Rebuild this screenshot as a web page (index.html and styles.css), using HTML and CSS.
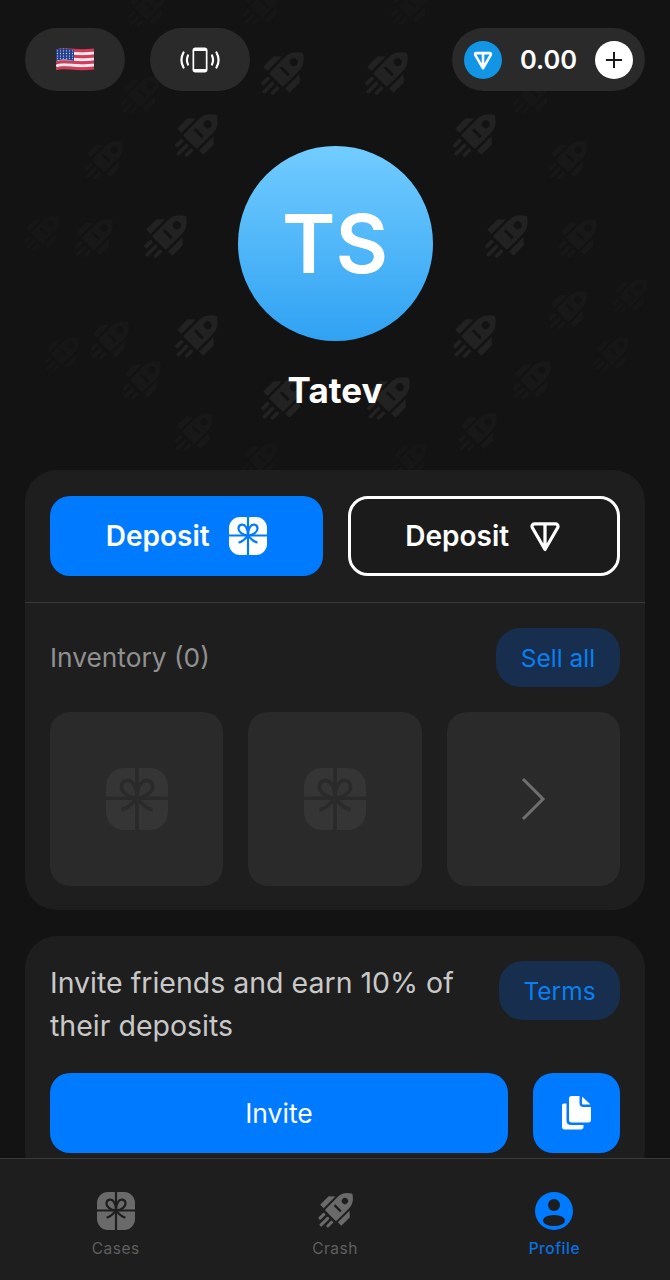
FILE: index.html
```html
<!DOCTYPE html>
<html lang="en">

<head>
    <meta charset="UTF-8">
    <meta name="viewport" content="width=device-width, initial-scale=1.0">
    <title>Profile</title>
    <link rel="stylesheet" href="styles.css">
</head>

<body>
    <!-- Shared icons -->
    <svg class="defs" width="0" height="0">
        <symbol id="gift" viewBox="0 0 38 38">
            <rect x="0" y="0" width="38" height="38" rx="11" fill="currentColor"></rect>
            <path class="cut" d="M19 0V38M0 18.5H38"></path>
            <path class="cut" d="M19 18.500C14 18 9 15 9.500 11C10 7 15 6.500 17 10C18.300 12 19 15 19 18.500C19 15 19.700 12 21 10C23 6.500 28 7 28.500 11C29 15 24 18 19 18.500C16.500 21 14 25 9.500 25.500M19 18.500C21.500 21 24 25 28.500 25.500"></path>
        </symbol>
        <symbol id="rocket" viewBox="0 0 38 38">
            <g transform="rotate(45 19 19)">
                <path fill="currentColor" d="M11 24V7C11 1 15 -3 19 -5.500C23 -3 27 1 27 7V24C27 25 26.500 25.500 25.500 25.500H12.500C11.500 25.500 11 25 11 24Z"></path>
                <circle class="hole" cx="19" cy="5" r="3.200"></circle>
                <rect class="hole" x="14.500" y="14" width="9" height="2.400"></rect>
                <path fill="currentColor" d="M4 25V13L9 8.500V25ZM34 25V13L29 8.500V25Z"></path>
                <rect fill="currentColor" x="12" y="28" width="3" height="8" rx="1"></rect>
                <rect fill="currentColor" x="17.500" y="28" width="3" height="12" rx="1"></rect>
                <rect fill="currentColor" x="23" y="28" width="3" height="8" rx="1"></rect>
            </g>
        </symbol>
        <pattern id="stars" width="3" height="2.600" patternUnits="userSpaceOnUse">
            <circle cx="1.500" cy="1.300" r=".6" fill="#c9d4f2"></circle>
        </pattern>
    </svg>

    <!-- Rockets behind the page -->
    <svg class="pattern" width="670" height="480" viewBox="0 0 670 480">
        <g class="rockets-strong">
            <use href="#rocket" x="258" y="51" width="47" height="47"></use>
            <use href="#rocket" x="362" y="51" width="47" height="47"></use>
            <use href="#rocket" x="172" y="113" width="47" height="47"></use>
            <use href="#rocket" x="450" y="113" width="47" height="47"></use>
            <use href="#rocket" x="141" y="214" width="47" height="47"></use>
            <use href="#rocket" x="482" y="214" width="47" height="47"></use>
            <use href="#rocket" x="172" y="314" width="47" height="47"></use>
            <use href="#rocket" x="450" y="314" width="47" height="47"></use>
            <use href="#rocket" x="258" y="376" width="47" height="47"></use>
            <use href="#rocket" x="364" y="376" width="47" height="47"></use>
        </g>
        <g class="rockets-mid">
            <use href="#rocket" x="82" y="140" width="42" height="42"></use>
            <use href="#rocket" x="546" y="140" width="42" height="42"></use>
            <use href="#rocket" x="72" y="218" width="42" height="42"></use>
            <use href="#rocket" x="556" y="218" width="42" height="42"></use>
            <use href="#rocket" x="88" y="320" width="42" height="42"></use>
            <use href="#rocket" x="546" y="290" width="42" height="42"></use>
            <use href="#rocket" x="120" y="360" width="42" height="42"></use>
            <use href="#rocket" x="510" y="360" width="42" height="42"></use>
            <use href="#rocket" x="172" y="412" width="42" height="42"></use>
            <use href="#rocket" x="456" y="412" width="42" height="42"></use>
        </g>
        <g class="rockets-faint">
            <use href="#rocket" x="118" y="75" width="42" height="42"></use>
            <use href="#rocket" x="510" y="75" width="42" height="42"></use>
            <use href="#rocket" x="125" y="-12" width="42" height="42"></use>
            <use href="#rocket" x="240" y="-14" width="42" height="42"></use>
            <use href="#rocket" x="388" y="-14" width="42" height="42"></use>
            <use href="#rocket" x="22" y="215" width="38" height="38"></use>
            <use href="#rocket" x="610" y="278" width="38" height="38"></use>
            <use href="#rocket" x="42" y="336" width="38" height="38"></use>
            <use href="#rocket" x="592" y="336" width="38" height="38"></use>
            <use href="#rocket" x="240" y="442" width="38" height="38"></use>
            <use href="#rocket" x="390" y="442" width="38" height="38"></use>
        </g>
    </svg>

    <div class="page">
        <header class="top">
            <div class="pill">
                <svg class="flag" width="38" height="26" viewBox="0 0 38 26">
                    <g class="stripes-red">
                        <path d="M0 4C9 0 17 6 38 3"></path>
                        <path d="M0 10C9 6 17 12 38 9"></path>
                        <path d="M0 16C9 12 17 18 38 15"></path>
                        <path d="M0 22C9 18 17 24 38 21"></path>
                    </g>
                    <g class="stripes-white">
                        <path d="M0 7C9 3 17 9 38 6"></path>
                        <path d="M0 13C9 9 17 15 38 12"></path>
                        <path d="M0 19C9 15 17 21 38 18"></path>
                    </g>
                    <path class="flag-blue" d="M0 2.500C6 1 10 1.500 18 3V14C10 12 6 12 0 14Z"></path>
                    <path class="flag-stars" d="M0 2.500C6 1 10 1.500 18 3V14C10 12 6 12 0 14Z"></path>
                </svg>
            </div>
            <div class="pill">
                <svg class="vibrate" width="40" height="28" viewBox="0 0 40 28">
                    <rect class="phone-body" x="12.500" y="1.500" width="15" height="25" rx="3"></rect>
                    <rect class="phone-screen" x="14.200" y="5" width="11.600" height="18"></rect>
                    <path class="arc" d="M3.500 6.500C1 11 1 17 3.500 21.500M8 9.500C6.800 12 6.800 16 8 18.500M36.500 6.500C39 11 39 17 36.500 21.500M32 9.500C33.200 12 33.200 16 32 18.500"></path>
                </svg>
            </div>
            <div class="balance">
                <span class="ton-coin">
                    <svg width="22" height="22" viewBox="0 0 24 24">
                        <path class="ton-line" d="M4.500 4.500H19.500C20.500 4.500 21 5.500 20.500 6.500L12 21L3.500 6.500C3 5.500 3.500 4.500 4.500 4.500ZM12 4.500V21"></path>
                    </svg>
                </span>
                <span class="balance-value">0.00</span>
                <span class="plus">
                    <svg width="18" height="18" viewBox="0 0 20 20">
                        <path class="plus-line" d="M10 1V19M1 10H19"></path>
                    </svg>
                </span>
            </div>
        </header>

        <section class="user">
            <div class="avatar">TS</div>
            <h1 class="name">Tatev</h1>
        </section>

        <section class="card">
            <div class="deposit-row">
                <button class="btn btn-blue">
                    Deposit
                    <svg class="gift-white" width="38" height="38"><use href="#gift"></use></svg>
                </button>
                <button class="btn btn-outline">
                    Deposit
                    <svg width="34" height="34" viewBox="0 0 24 24">
                        <path class="ton-line-big" d="M4.500 3.500H19.500C21 3.500 21.500 5 21 6L12 21.500L3 6C2.500 5 3 3.500 4.500 3.500ZM12 3.500V21.500"></path>
                    </svg>
                </button>
            </div>
            <div class="inventory">
                <div class="inventory-head">
                    <h2 class="inventory-title">Inventory (0)</h2>
                    <button class="btn-soft sell">Sell all</button>
                </div>
                <div class="tiles">
                    <div class="tile"><svg class="gift-dim" width="62" height="62"><use href="#gift"></use></svg></div>
                    <div class="tile"><svg class="gift-dim" width="62" height="62"><use href="#gift"></use></svg></div>
                    <div class="tile">
                        <svg width="26" height="44" viewBox="0 0 26 44">
                            <path class="chevron" d="M3 2L23 22L3 42"></path>
                        </svg>
                    </div>
                </div>
            </div>
        </section>

        <section class="card invite-card">
            <div class="invite-head">
                <p class="invite-text">Invite friends and earn 10% of their deposits</p>
                <button class="btn-soft terms">Terms</button>
            </div>
            <div class="invite-row">
                <button class="btn-invite">Invite</button>
                <button class="btn-copy">
                    <svg width="30" height="34" viewBox="0 0 30 34">
                        <path class="copy-back" d="M2 7.500C0.800 7.500 0 8.300 0 9.500V31C0 32.500 1 33.500 2.500 33.500H19C20.500 33.500 21.500 32.500 21.500 31V29H9C6 29 4.500 27.500 4.500 24.500V7.500Z"></path>
                        <path class="copy-front" d="M9.500 0C7.800 0 7 1 7 2.500V24C7 25.500 8 26.500 9.500 26.500H26.500C28 26.500 29 25.500 29 24V11H21C19 11 17.500 9.500 17.500 7.500V0ZM20 0.500V7C20 8 20.500 8.500 21.500 8.500H28.500Z"></path>
                    </svg>
                </button>
            </div>
        </section>
    </div>

    <nav class="tabbar">
        <div class="tab">
            <svg class="gift-tab" width="38" height="38"><use href="#gift"></use></svg>
            <span>Cases</span>
        </div>
        <div class="tab">
            <svg class="rocket-tab" width="38" height="38"><use href="#rocket"></use></svg>
            <span>Crash</span>
        </div>
        <div class="tab tab-active">
            <svg width="38" height="38" viewBox="0 0 38 38">
                <circle cx="19" cy="19" r="19" fill="currentColor"></circle>
                <circle class="person" cx="19" cy="13" r="6"></circle>
                <ellipse class="person" cx="19" cy="28.500" rx="11" ry="5.500"></ellipse>
            </svg>
            <span>Profile</span>
        </div>
    </nav>
</body>

</html>
```

FILE: styles.css
```css
* {
    box-sizing: border-box;
}

body {
    margin: 0;
    width: 670px;
    height: 1280px;
    overflow: hidden;
    position: relative;
    background-color: #131313;
    font-family: Inter, "Noto Sans", sans-serif;
    color: #fff;
}

button {
    font-family: inherit;
    border: none;
    cursor: pointer;
}

.defs {
    position: absolute;
}

.pattern {
    position: absolute;
    top: 0;
    left: 0;
    filter: blur(.6px);
    --hole: #131313;
}

.rockets-strong {
    color: #222222;
}

.rockets-mid {
    color: #181818;
}

.rockets-faint {
    color: #161616;
}

.cut {
    fill: none;
    stroke: var(--cut);
    stroke-width: 2.200;
}

.hole {
    fill: var(--hole);
}

.page {
    position: relative;
    padding: 28px 25px 0;
}

/* Top bar */
.top {
    display: flex;
    align-items: center;
    gap: 25px;
}

.pill {
    width: 100px;
    height: 63px;
    border-radius: 32px;
    background-color: #2a2a2a;
    display: flex;
    align-items: center;
    justify-content: center;
}

.stripes-red path,
.stripes-white path {
    fill: none;
    stroke-width: 3;
}

.stripes-red path {
    stroke: #d8385a;
}

.stripes-white path {
    stroke: #f4e6ea;
}

.flag-blue {
    fill: #23408f;
}

.flag-stars {
    fill: url(#stars);
}

.phone-body {
    fill: #fff;
}

.phone-screen {
    fill: #2a2a2a;
}

.arc {
    fill: none;
    stroke: #fff;
    stroke-width: 2.200;
    stroke-linecap: round;
}

.balance {
    margin-left: auto;
    width: 193px;
    height: 63px;
    border-radius: 32px;
    background-color: #2a2a2a;
    display: flex;
    align-items: center;
    padding: 0 12px;
}

.ton-coin {
    width: 38px;
    height: 38px;
    border-radius: 50%;
    background-color: #1295e4;
    display: flex;
    align-items: center;
    justify-content: center;
}

.ton-line {
    fill: none;
    stroke: #fff;
    stroke-width: 2.800;
    stroke-linejoin: round;
}

.balance-value {
    flex: 1;
    text-align: center;
    font-size: 25.500px;
    font-weight: 600;
}

.plus {
    width: 38px;
    height: 38px;
    border-radius: 50%;
    background-color: #fff;
    display: flex;
    align-items: center;
    justify-content: center;
}

.plus-line {
    stroke: #1a1a1a;
    stroke-width: 2.200;
}

/* Avatar and name */
.user {
    display: flex;
    flex-direction: column;
    align-items: center;
    padding-top: 55px;
}

.avatar {
    width: 195px;
    height: 195px;
    border-radius: 50%;
    background: linear-gradient(#72ccff, #30a2f3);
    display: flex;
    align-items: center;
    justify-content: center;
    font-size: 81px;
    font-weight: 600;
}

.name {
    margin: 27px 0 0;
    font-size: 35px;
    line-height: 44px;
    font-weight: 700;
}

/* Cards */
.card {
    margin-top: 58px;
    background-color: #1e1e1e;
    border-radius: 32px;
}

.deposit-row {
    display: grid;
    grid-template-columns: 1fr 1fr;
    gap: 25px;
    padding: 26px 25px;
    border-bottom: 1px solid #3a3a3a;
}

.btn {
    height: 80px;
    border-radius: 20px;
    display: flex;
    align-items: center;
    justify-content: center;
    gap: 19px;
    font-size: 28px;
    font-weight: 600;
    color: #fff;
}

.btn-blue {
    background-color: #007aff;
    --cut: #007aff;
}

.gift-white {
    color: #fff;
}

.btn-outline {
    background-color: #1b1b1b;
    border: 3px solid #fff;
}

.ton-line-big {
    fill: none;
    stroke: #fff;
    stroke-width: 2.300;
    stroke-linejoin: round;
}

.inventory {
    padding: 25px 25px 24px;
}

.inventory-head {
    display: flex;
    align-items: center;
    justify-content: space-between;
}

.inventory-title {
    margin: 0;
    font-size: 26.300px;
    font-weight: 400;
    color: #909090;
}

.btn-soft {
    height: 59px;
    border-radius: 24px;
    background-color: #172e4e;
    color: #0a7ff0;
    font-size: 24.500px;
    font-weight: 400;
}

.sell {
    width: 124px;
}

.terms {
    width: 121px;
    flex-shrink: 0;
}

.tiles {
    display: grid;
    grid-template-columns: repeat(3, 1fr);
    gap: 25px;
    margin-top: 25px;
}

.tile {
    height: 174px;
    border-radius: 20px;
    background-color: #2a2a2a;
    display: flex;
    align-items: center;
    justify-content: center;
    --cut: #2a2a2a;
}

.gift-dim {
    color: #353535;
}

.chevron {
    fill: none;
    stroke: #6f6f6f;
    stroke-width: 3;
}

.invite-card {
    margin-top: 26px;
    padding: 25px;
    padding-bottom: 30px;
}

.invite-head {
    display: flex;
    align-items: flex-start;
    justify-content: space-between;
    gap: 30px;
}

.invite-text {
    margin: 0;
    font-size: 28.500px;
    line-height: 43px;
    color: #c8c8c8;
}

.invite-row {
    display: flex;
    gap: 25px;
    margin-top: 26px;
}

.btn-invite {
    flex: 1;
    height: 80px;
    border-radius: 20px;
    background-color: #007aff;
    color: #fff;
    font-size: 26.500px;
    font-weight: 400;
}

.btn-copy {
    width: 87px;
    height: 80px;
    border-radius: 20px;
    background-color: #007aff;
    display: flex;
    align-items: center;
    justify-content: center;
}

.copy-back,
.copy-front {
    fill: #fff;
    fill-rule: evenodd;
}

/* Bottom tabs */
.tabbar {
    position: absolute;
    left: 0;
    right: 0;
    bottom: 0;
    height: 122px;
    display: flex;
    background-color: #1e1e1e;
    border-top: 1px solid #3a3a3a;
    padding: 33px 6px 0;
    --cut: #1e1e1e;
    --hole: #1e1e1e;
}

.tab {
    flex: 1;
    display: flex;
    flex-direction: column;
    align-items: center;
    gap: 9px;
    font-size: 15.500px;
    font-weight: 400;
    color: #5f5f5f;
    letter-spacing: .5px;
}

.gift-tab,
.rocket-tab {
    color: #6a6a6a;
}

.tab-active {
    color: #0a70e0;
    font-weight: 500;
}

.tab-active svg {
    color: #007aff;
}

.person {
    fill: #1e1e1e;
}
```
